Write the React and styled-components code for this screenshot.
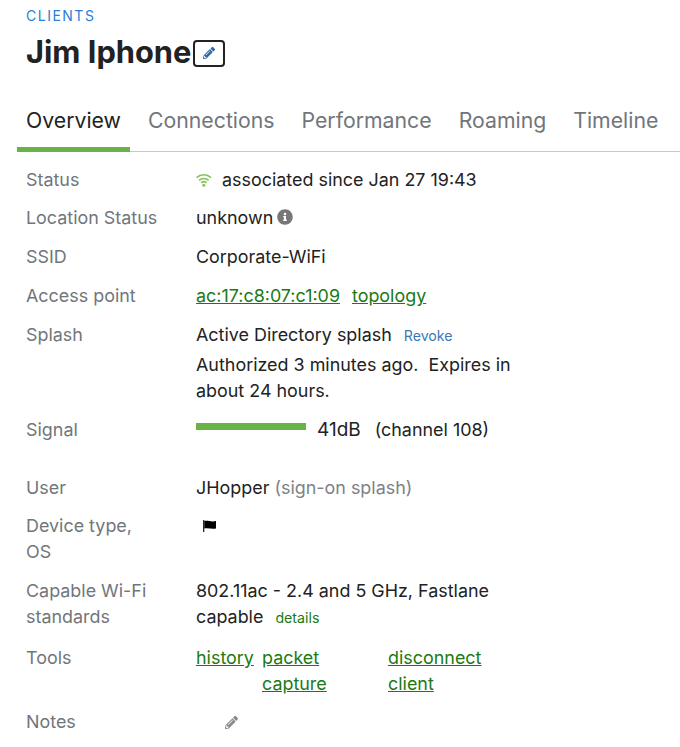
import styled, { createGlobalStyle } from 'styled-components';
import { FaInfoCircle, FaPencilAlt } from 'react-icons/fa';

const Global = createGlobalStyle`
    html, body {
        margin: 0;
        background: #fff;
        overflow: hidden;
    }
    body {
        font-family: Inter, "Noto Sans", sans-serif;
        color: #222;
    }
`

const Page = styled.div`
    width: 680px;
    height: 747px;
    overflow: hidden;
`

const Head = styled.header`
    padding: 8px 0 0 26px;
`

const Crumb = styled.a`
    display: block;
    font-size: 14px;
    line-height: 16px;
    letter-spacing: 1.5px;
    color: #2a7fd5;
`

const TitleRow = styled.div`
    display: flex;
    align-items: center;
    margin-top: 5px;
`

const Title = styled.h1`
    margin: 0;
    font-size: 30.8px;
    line-height: 46px;
    font-weight: 700;
    color: #222;
`

const EditButton = styled.button`
    width: 32px;
    height: 27px;
    margin: 2px 0 0 2px;
    padding: 0;
    display: flex;
    align-items: center;
    justify-content: center;
    background: #fff;
    border: 2px solid #222;
    border-radius: 4px;
    color: #2f6aa5;
    font-size: 12px;
`

const Tabs = styled.nav`
    display: flex;
    margin: 21px 0 0 17px;
    height: 56px;
    box-sizing: border-box;
    border-bottom: 1px solid #c8c8c8;
`

const Tab = styled.a`
    padding: 0 9px;
    margin-right: 9px;
    font-size: 21.25px;
    line-height: 48px;
    color: ${p => (p.$active ? '#222' : '#71767b')};
    border-bottom: ${p => (p.$active ? '5px solid #67b346' : 'none')};
    height: 51px;
    white-space: nowrap;
`

const Details = styled.section`
    padding: 15px 0 0 26px;
`

const Row = styled.div`
    display: grid;
    grid-template-columns: 170px 330px;
    padding-bottom: ${p => p.$gap ?? 13}px;
    font-size: 17.92px;
    line-height: 26px;
`

const Label = styled.div`
    color: #71767b;
`

const Value = styled.div`
    color: #222;
`

const Green = styled.a`
    color: #1b7a12;
    text-decoration: underline;
`

const AccessLinks = styled.div`
    display: flex;
    gap: 12px;
`

const WifiIcon = styled.svg`
    width: 16px;
    height: 14px;
    margin-right: 10px;
    vertical-align: -1px;
`

const InfoIcon = styled(FaInfoCircle)`
    color: #777;
    font-size: 16px;
    margin-left: 4px;
    vertical-align: -1px;
`

const SmallLink = styled.a`
    font-size: 14.2px;
    margin-left: 12px;
    color: ${p => p.$color};
`

const SplashLine = styled.div`
    margin-bottom: 3px;
`

const SignalRow = styled.div`
    display: flex;
    align-items: center;
    height: 26px;
`

const Bar = styled.div`
    width: 110px;
    height: 7px;
    background: #67b346;
    margin: -7px 11px 0 0;
`

const Db = styled.span`
    font-size: 19px;
    margin-right: 14px;
`

const Muted = styled.span`
    color: #7d8287;
`

const Flag = styled.svg`
    display: block;
    width: 16px;
    height: 14px;
    margin: 6px 0 0 7px;
`

const Tools = styled.div`
    display: flex;
`

const Tool = styled.div`
    width: ${p => p.$w}px;
`

const NotesIcon = styled(FaPencilAlt)`
    color: #8a8a8a;
    font-size: 13px;
    margin: 7px 0 0 29px;
    display: block;
`

export default function App() {
    return (
        <Page>
            <Global />
            <Head>
                <Crumb>CLIENTS</Crumb>
                <TitleRow>
                    <Title>Jim Iphone</Title>
                    <EditButton><FaPencilAlt /></EditButton>
                </TitleRow>
            </Head>
            <Tabs>
                <Tab $active>Overview</Tab>
                <Tab>Connections</Tab>
                <Tab>Performance</Tab>
                <Tab>Roaming</Tab>
                <Tab>Timeline</Tab>
            </Tabs>
            <Details>
                <Row $gap={12}>
                    <Label>Status</Label>
                    <Value>
                        <WifiIcon viewBox="0 0 16 14" fill="none" stroke="#84c45a" strokeWidth="1.7">
                            <path d="M0.6 4.6 A10.5 10.5 0 0 1 15 4.6" />
                            <path d="M3 7.4 A7 7 0 0 1 12.6 7.4" />
                            <path d="M5.2 9.8 A3.6 3.6 0 0 1 10.4 9.8" />
                            <circle cx="7.8" cy="12.2" r="1.5" fill="#84c45a" stroke="none" />
                        </WifiIcon>
                        associated since Jan 27 19:43
                    </Value>
                </Row>
                <Row>
                    <Label>Location Status</Label>
                    <Value>unknown<InfoIcon /></Value>
                </Row>
                <Row>
                    <Label>SSID</Label>
                    <Value>Corporate-WiFi</Value>
                </Row>
                <Row>
                    <Label>Access point</Label>
                    <AccessLinks>
                        <Green>ac:17:c8:07:c1:09</Green>
                        <Green>topology</Green>
                    </AccessLinks>
                </Row>
                <Row>
                    <Label>Splash</Label>
                    <Value>
                        <SplashLine>Active Directory splash<SmallLink $color="#3b78b5">Revoke</SmallLink></SplashLine>
                        Authorized 3 minutes ago.&nbsp; Expires in<br />about 24 hours.
                    </Value>
                </Row>
                <Row $gap={32}>
                    <Label>Signal</Label>
                    <SignalRow>
                        <Bar />
                        <Db>41dB</Db>
                        <span>(channel 108)</span>
                    </SignalRow>
                </Row>
                <Row $gap={12}>
                    <Label>User</Label>
                    <Value>JHopper <Muted>(sign-on splash)</Muted></Value>
                </Row>
                <Row>
                    <Label>Device type,<br />OS</Label>
                    <Value>
                        <Flag viewBox="0 0 16 14">
                            <rect x="0" y="1" width="1.3" height="12" fill="#2a2a10" />
                            <path d="M1.3 2 C5 1 8 3.4 13 2 L13 9.4 C9 10.6 5 8.4 1.3 9.6 Z" fill="#000" />
                        </Flag>
                    </Value>
                </Row>
                <Row $gap={14}>
                    <Label>Capable Wi-Fi<br />standards</Label>
                    <Value>
                        802.11ac - 2.4 and 5 GHz, Fastlane<br />
                        capable<SmallLink $color="#1b7a12">details</SmallLink>
                    </Value>
                </Row>
                <Row $gap={12}>
                    <Label>Tools</Label>
                    <Tools>
                        <Tool $w={66}><Green>history</Green></Tool>
                        <Tool $w={126}><Green>packet<br />capture</Green></Tool>
                        <Tool $w={110}><Green>disconnect<br />client</Green></Tool>
                    </Tools>
                </Row>
                <Row>
                    <Label>Notes</Label>
                    <Value><NotesIcon /></Value>
                </Row>
            </Details>
        </Page>
    )
}
